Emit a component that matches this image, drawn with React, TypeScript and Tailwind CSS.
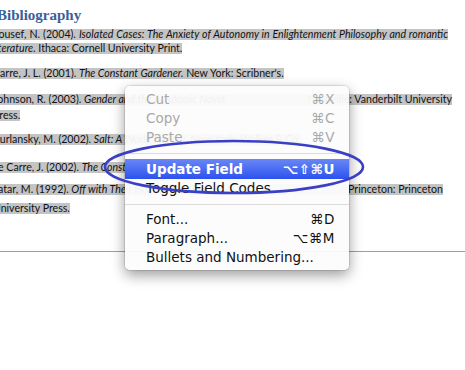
import React from 'react';

const hl = 'inline-block h-[11px] leading-[11px] bg-[#c4c4c4] whitespace-nowrap';
const hlSplit = 'flex justify-between h-[11px] leading-[11px] bg-[#c4c4c4] whitespace-nowrap';

type MenuItem = { label: string; keys?: string; disabled?: boolean; active?: boolean; sep?: boolean };

const menu: MenuItem[] = [
  { label: 'Cut', keys: '⌘X', disabled: true },
  { label: 'Copy', keys: '⌘C', disabled: true },
  { label: 'Paste', keys: '⌘V', disabled: true },
  { label: '', sep: true },
  { label: 'Update Field', keys: '⌥⇧⌘U', active: true },
  { label: 'Toggle Field Codes' },
  { label: '', sep: true },
  { label: 'Font...', keys: '⌘D' },
  { label: 'Paragraph...', keys: '⌥⌘M' },
  { label: 'Bullets and Numbering...' },
];

function ContextMenu() {
  return (
    <div className="absolute left-[125px] top-[86px] w-[224px] rounded-[5px] bg-[#fcfcfc]/[0.95] pt-[4px] pb-[3px] shadow-[0_5px_14px_rgba(0,0,0,0.4)] ring-1 ring-black/10 font-['DejaVu_Sans',sans-serif] text-[13.5px]">
      {menu.map((m, i) =>
        m.sep ? (
          <div key={i} className="flex h-[12px] items-center">
            <div className="h-px w-full bg-[#dcdcdc]" />
          </div>
        ) : (
          <div
            key={i}
            className={`flex items-center justify-between pl-[21px] pr-[14px] ${
              m.active
                ? 'h-[20px] bg-gradient-to-b from-[#6a86f5] to-[#2c51ee] text-white font-semibold'
                : m.disabled
                ? 'h-[19px] text-[#a9a9a9]'
                : 'h-[19px] text-[#111]'
            }`}
          >
            <span>{m.label}</span>
            {m.keys && <span className="tracking-[0.5px]">{m.keys}</span>}
          </div>
        )
      )}
    </div>
  );
}

export default function App() {
  return (
    <div className="relative h-[370px] w-[465px] overflow-hidden bg-white">
      <div className="-ml-[7px] font-['Lato',sans-serif] text-[10.6px] text-[#111]">
        <div className="mt-[6px] ml-[4px] h-[18px] leading-[18px] font-['Liberation_Serif',serif] text-[15px] font-bold text-[#3a6098]">
          Bibliography
        </div>

        <div className="mt-[3px] h-[14px]">
          <span className={`${hl} w-[455px] [text-align-last:justify]`}>
            Yousef, N. (2004). <i>Isolated Cases: The Anxiety of Autonomy in Enlightenment Philosophy and romantic</i>
          </span>
        </div>
        <div className="h-[14px]">
          <span className={hl}>
            <i>literature.</i> Ithaca: Cornell University Print.
          </span>
        </div>

        <div className="mt-[11px] h-[14px]">
          <span className={hl}>
            Carre, J. L. (2001). <i>The Constant Gardener.</i> New York: Scribner's.
          </span>
        </div>

        <div className="mt-[14px] h-[14px]">
          <div className={`${hlSplit} w-[459px]`}>
            <span>
              Johnson, R. (2003). <i>Gender and the Academic Novel.</i>
            </span>
            <span>Nashville: Vanderbilt University</span>
          </div>
        </div>
        <div className="h-[14px]">
          <span className={hl}>Press.</span>
        </div>

        <div className="mt-[10px] h-[14px]">
          <span className={hl}>
            Kurlansky, M. (2002). <i>Salt: A World History.</i> New York: Walker &amp; Co.
          </span>
        </div>

        <div className="mt-[14px] h-[14px]">
          <span className={hl}>
            Le Carre, J. (2002). <i>The Constant Gardener.</i> London: Scribner.
          </span>
        </div>

        <div className="mt-[10px] h-[14px]">
          <div className={`${hlSplit} w-[450px]`}>
            <span>
              Tatar, M. (1992). <i>Off with Their Heads! Fairy Tales.</i>
            </span>
            <span>Princeton: Princeton</span>
          </div>
        </div>
        <div className="mt-[3px] h-[14px]">
          <span className={hl}>University Press.</span>
        </div>

        <div className="mt-[36px] h-px w-[480px] bg-[#7ea3da]" />
      </div>

      <ContextMenu />

      <svg className="absolute left-[102px] top-[138px]" width="266" height="60" viewBox="0 0 266 60">
        <ellipse cx="132" cy="29" rx="129" ry="26" fill="none" stroke="#3a3fc6" strokeWidth="2.6" />
      </svg>
    </div>
  );
}
